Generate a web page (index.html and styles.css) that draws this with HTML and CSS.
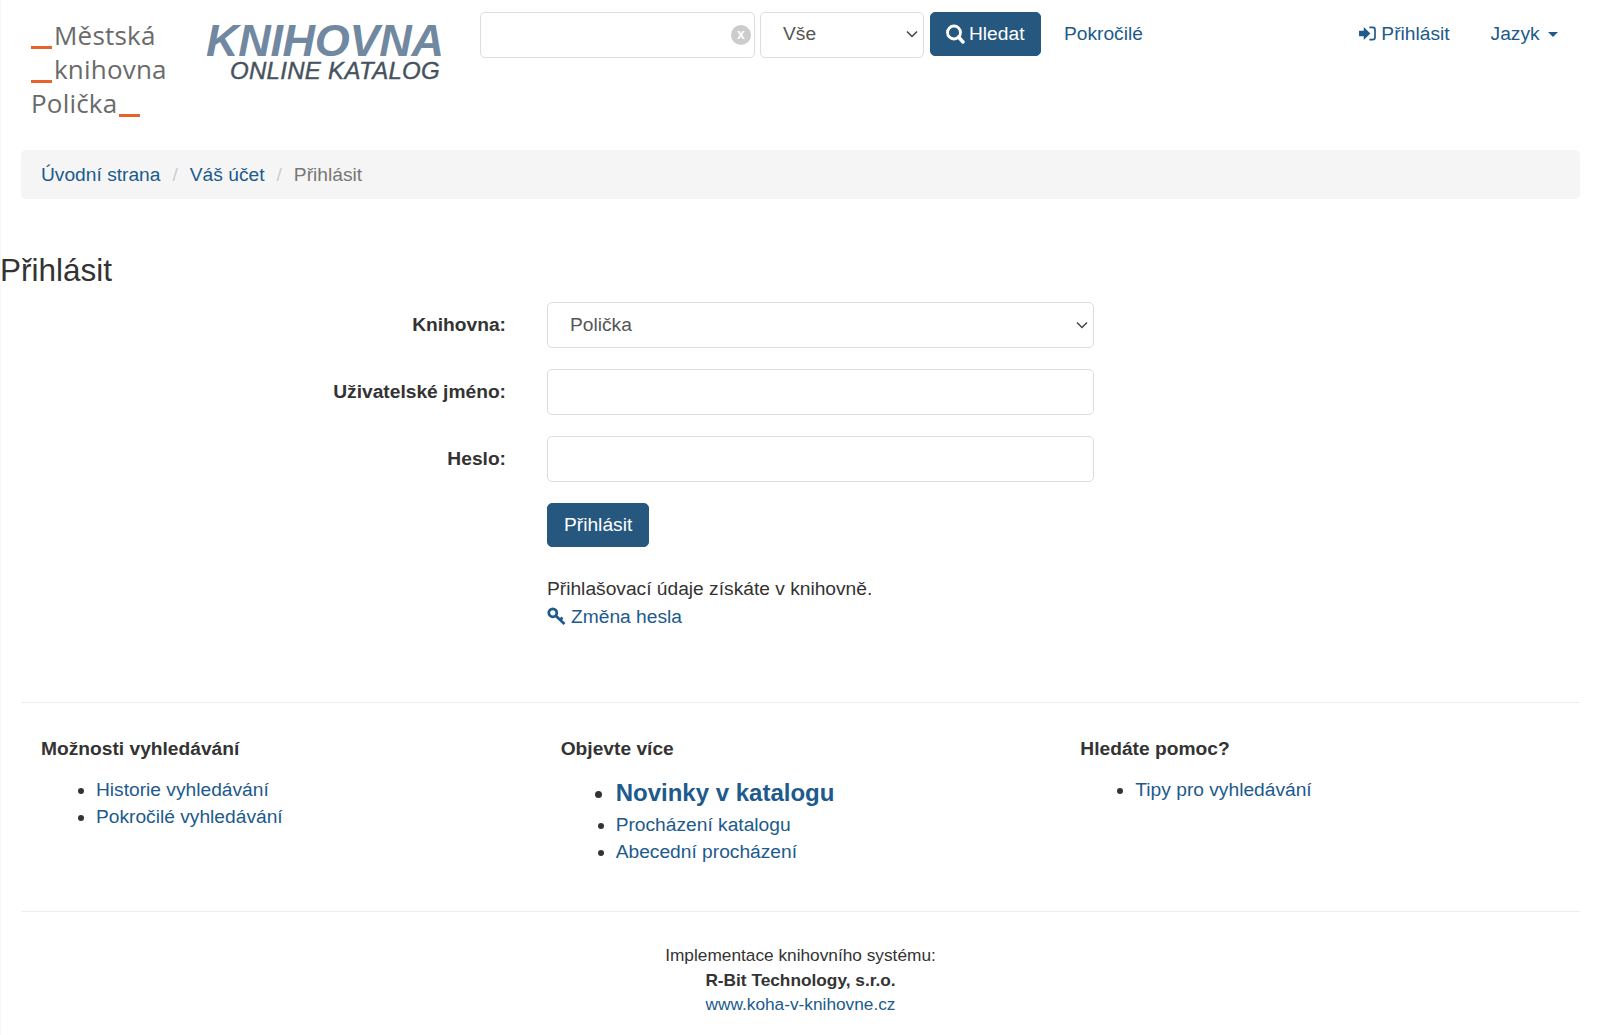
FILE: index.html
```html
<!DOCTYPE html>
<html lang="cs">
<head>
    <meta charset="UTF-8">
    <title>Přihlásit</title>
    <link rel="stylesheet" href="styles.css">
</head>
<body>
    <header class="top">
        <div class="logo">
            <div><span class="dash dashLeft"></span>Městská</div>
            <div><span class="dash dashLeft"></span>knihovna</div>
            <div>Polička<span class="dash dashRight"></span></div>
        </div>
        <div class="brand">
            <div class="brandMain">KNIHOVNA</div>
            <div class="brandSub">ONLINE KATALOG</div>
        </div>
        <form class="search">
            <div class="searchBox">
                <span class="clear">x</span>
            </div>
            <div class="selectBox searchType">Vše
                <svg class="chev" width="12" height="8" viewBox="0 0 12 8"><path d="M1 1.500l5 5 5-5" fill="none" stroke="#444" stroke-width="1.500"/></svg>
            </div>
            <button type="button" class="btn btnSearch">
                <svg class="icon" width="19" height="20" viewBox="0 0 19 20"><circle cx="8" cy="8.500" r="6.500" fill="none" stroke="#fff" stroke-width="2.800"/><path d="M12.500 13l4.500 5" stroke="#fff" stroke-width="3.400" stroke-linecap="round"/></svg>
                Hledat
            </button>
            <a class="advanced" href="#">Pokročilé</a>
        </form>
        <nav class="userNav">
            <a href="#" class="loginLink">
                <svg class="icon" width="17" height="15" viewBox="0 0 18 16"><path d="M0 5h5V1l7 7-7 7v-4H0z" fill="#205a8c"/><path d="M11 1.500h3.500a2.500 2.500 0 0 1 2.500 2.500v8a2.500 2.500 0 0 1-2.500 2.500H11" fill="none" stroke="#205a8c" stroke-width="1.800"/></svg>
                Přihlásit
            </a>
            <a href="#" class="lang">Jazyk <span class="caret"></span></a>
        </nav>
    </header>

    <ul class="breadcrumb">
        <li><a href="#">Úvodní strana</a></li>
        <li class="sep">/</li>
        <li><a href="#">Váš účet</a></li>
        <li class="sep">/</li>
        <li class="current">Přihlásit</li>
    </ul>

    <h1>Přihlásit</h1>

    <form class="login">
        <div class="row">
            <label>Knihovna:</label>
            <div class="selectBox field">Polička
                <svg class="chev" width="12" height="8" viewBox="0 0 12 8"><path d="M1 1.500l5 5 5-5" fill="none" stroke="#444" stroke-width="1.500"/></svg>
            </div>
        </div>
        <div class="row">
            <label for="user">Uživatelské jméno:</label>
            <input id="user" class="field" type="text">
        </div>
        <div class="row">
            <label for="pass">Heslo:</label>
            <input id="pass" class="field" type="password">
        </div>
        <div class="actions">
            <button type="button" class="btn btnLogin">Přihlásit</button>
            <p class="hint">Přihlašovací údaje získáte v knihovně.</p>
            <a href="#" class="pwLink">
                <svg class="icon" width="19" height="19" viewBox="0 0 19 19"><circle cx="5.800" cy="5.800" r="4" fill="none" stroke="#205a8c" stroke-width="2.800"/><path d="M9 9l8.500 8M13 13l2.500-2.500" fill="none" stroke="#205a8c" stroke-width="2.800"/></svg>
                Změna hesla
            </a>
        </div>
    </form>

    <section class="links">
        <div class="col">
            <h4>Možnosti vyhledávání</h4>
            <ul>
                <li><a href="#">Historie vyhledávání</a></li>
                <li><a href="#">Pokročilé vyhledávání</a></li>
            </ul>
        </div>
        <div class="col">
            <h4>Objevte více</h4>
            <ul>
                <li class="big"><a href="#">Novinky v katalogu</a></li>
                <li><a href="#">Procházení katalogu</a></li>
                <li><a href="#">Abecední procházení</a></li>
            </ul>
        </div>
        <div class="col">
            <h4>Hledáte pomoc?</h4>
            <ul>
                <li><a href="#">Tipy pro vyhledávání</a></li>
            </ul>
        </div>
    </section>

    <footer class="foot">
        <div>Implementace knihovního systému:</div>
        <div><b>R-Bit Technology, s.r.o.</b></div>
        <div><a href="#">www.koha-v-knihovne.cz</a></div>
    </footer>
</body>
</html>
```

FILE: styles.css
```css
body{
    margin: 0;
    min-height: 100vh;
    font-family: "Liberation Sans", Arial, sans-serif;
    font-size: 19.2px;
    line-height: 27.5px;
    color: #333;
    background-color: #fff;
    box-shadow: inset 1px 0 0 #f7f7f7;
}
a{
    color: #205a8c;
    text-decoration: none;
}
.icon{
    flex-shrink: 0;
}
.top{
    display: flex;
    height: 150px;
    box-sizing: border-box;
    padding-top: 12px;
}
.logo{
    width: 206px;
    padding-left: 31px;
    padding-top: 6px;
    box-sizing: border-box;
    font-family: "Open Sans", sans-serif;
    font-size: 26px;
    line-height: 34px;
    letter-spacing: 0.2px;
    color: #6a6a6a;
}
.dash{
    display: inline-block;
    width: 21px;
    height: 3px;
    vertical-align: -4px;
    background-color: #e8622c;
}
.dashLeft{
    margin-right: 2px;
}
.dashRight{
    margin-left: 2px;
}
.brand{
    width: 274px;
    box-sizing: border-box;
    font-style: italic;
    font-weight: bold;
}
.brandMain{
    font-size: 45px;
    line-height: 38px;
    margin-top: 10px;
    color: #7088a0;
    letter-spacing: -0.3px;
}
.brandSub{
    font-size: 24px;
    line-height: 22px;
    padding-left: 24px;
    color: #46525e;
    font-weight: normal;
    letter-spacing: 0.3px;
    -webkit-text-stroke: 0.4px #46525e;
}
.search{
    display: flex;
    align-items: flex-start;
    gap: 5px;
}
.searchBox,
.selectBox,
.field{
    box-sizing: border-box;
    border: 1px solid #ddd;
    border-radius: 5px;
    background-color: #fff;
    height: 46px;
    color: #555;
}
.searchBox{
    position: relative;
    width: 275px;
}
.clear{
    position: absolute;
    right: 3px;
    top: 12px;
    width: 20px;
    height: 20px;
    border-radius: 50%;
    background-color: #ccc;
    color: #fff;
    font-size: 14px;
    font-weight: bold;
    line-height: 19px;
    text-align: center;
}
.selectBox{
    display: flex;
    align-items: center;
    justify-content: space-between;
    padding: 0 5px 0 22px;
}
.searchType{
    width: 164px;
    padding-bottom: 2px;
}
.btn{
    font-family: inherit;
    font-size: 19.2px;
    color: #fff;
    background-color: #26587f;
    border: 1px solid #26587f;
    border-radius: 5px;
    height: 44px;
    padding: 0 15px;
}
.btnSearch{
    display: flex;
    align-items: center;
    gap: 4px;
    width: 111px;
    margin-left: 1px;
}
.advanced{
    margin-left: 18px;
    margin-top: 8px;
}
.userNav{
    display: flex;
    gap: 41px;
    margin-left: auto;
    padding-right: 42px;
    padding-top: 8px;
}
.loginLink{
    display: flex;
    align-items: center;
    gap: 5px;
    height: 27px;
}
.caret{
    display: inline-block;
    margin-left: 3px;
    border-top: 5px solid #205a8c;
    border-left: 5px solid transparent;
    border-right: 5px solid transparent;
    vertical-align: middle;
}
.breadcrumb{
    display: flex;
    gap: 12px;
    list-style: none;
    margin: 0 20px 0 21px;
    padding: 11px 20px;
    height: 27px;
    background-color: #f5f5f5;
    border-radius: 5px;
}
.sep{
    color: #ccc;
}
.current{
    color: #777;
}
h1{
    margin: 51px 0 0 0;
    font-size: 31.5px;
    line-height: 40px;
    font-weight: normal;
}
.login{
    margin-top: 12px;
}
.row{
    display: flex;
    align-items: center;
    margin-bottom: 21px;
}
.row label{
    width: 506px;
    text-align: right;
    font-weight: bold;
    margin-right: 41px;
}
.field{
    width: 547px;
    font: inherit;
}
.actions{
    margin-left: 547px;
}
.btnLogin{
    display: block;
    padding: 0 16px;
}
.hint{
    margin: 28px 0 0 0;
}
.pwLink{
    display: flex;
    align-items: center;
    gap: 5px;
}
.links{
    display: flex;
    margin: 72px 20px 0 21px;
    padding: 30px 0 0 0;
    height: 178px;
    border-top: 1px solid #eee;
}
.col{
    width: 520px;
    padding-left: 20px;
    box-sizing: border-box;
}
h4{
    margin: 2px 0 0 0;
    font-size: 19.2px;
    line-height: 27.5px;
}
.col ul{
    margin: 13px 0 0 0;
    padding-left: 55px;
}
.big{
    font-size: 24px;
    font-weight: bold;
    line-height: 33px;
}
.col .big + li{
    margin-top: 2px;
}
.foot{
    margin: 0 20px 0 21px;
    padding-top: 31px;
    border-top: 1px solid #eee;
    text-align: center;
    font-size: 17.28px;
    line-height: 24.5px;
}
```
